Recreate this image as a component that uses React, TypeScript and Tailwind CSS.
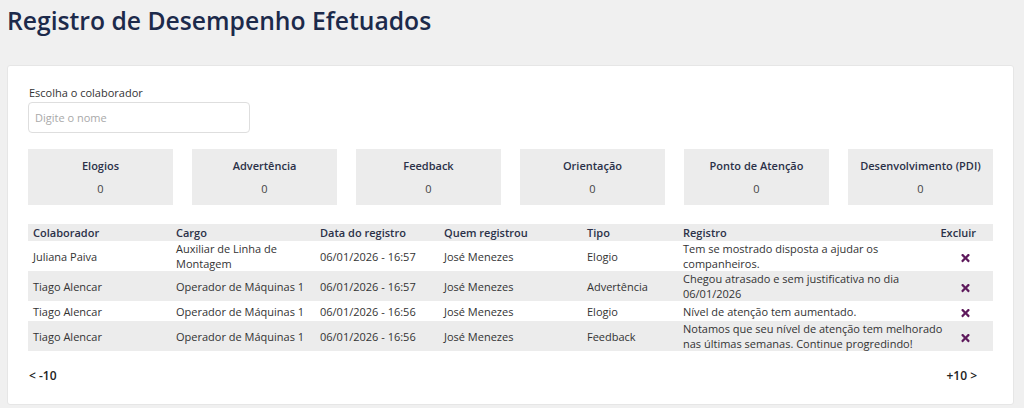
import React from 'react';
import { FaTimes } from 'react-icons/fa';

const stats = ['Elogios', 'Advertência', 'Feedback', 'Orientação', 'Ponto de Atenção', 'Desenvolvimento (PDI)'];

const rows = [
  { nome: 'Juliana Paiva', cargo: ['Auxiliar de Linha de', 'Montagem'], data: '06/01/2026 - 16:57', quem: 'José Menezes', tipo: 'Elogio', registro: ['Tem se mostrado disposta a ajudar os', 'companheiros.'] },
  { nome: 'Tiago Alencar', cargo: ['Operador de Máquinas 1'], data: '06/01/2026 - 16:57', quem: 'José Menezes', tipo: 'Advertência', registro: ['Chegou atrasado e sem justificativa no dia', '06/01/2026'] },
  { nome: 'Tiago Alencar', cargo: ['Operador de Máquinas 1'], data: '06/01/2026 - 16:56', quem: 'José Menezes', tipo: 'Elogio', registro: ['Nível de atenção tem aumentado.'] },
  { nome: 'Tiago Alencar', cargo: ['Operador de Máquinas 1'], data: '06/01/2026 - 16:56', quem: 'José Menezes', tipo: 'Feedback', registro: ['Notamos que seu nível de atenção tem melhorado', 'nas últimas semanas. Continue progredindo!'] },
];

const Lines = ({ lines }: { lines: string[] }) => (
  <>
    {lines.map((l, i) => (
      <span key={i} className="block whitespace-nowrap">{l}</span>
    ))}
  </>
);

export default function App() {
  return (
    <div className="min-h-[408px] bg-[#f0f0f0] font-['Open_Sans',sans-serif] text-[#333]">
      <h1 className="px-[7px] pt-[3px] text-[24.7px] font-semibold leading-[36px] text-[#1c2a4b]">
        Registro de Desempenho Efetuados
      </h1>

      <div className="mt-[26px] ml-[7px] mr-[10px] rounded-[3px] border border-[#e6e6e6] bg-white px-[20px] pt-[19px] pb-[20px]">
        <label className="block pl-[1px] text-[11px] leading-[15px] text-[#333]">Escolha o colaborador</label>
        <input
          placeholder="Digite o nome"
          className="mt-[2px] h-[31px] w-[222px] rounded-[4px] border border-[#dedede] px-[6px] text-[11px] outline-none placeholder:text-[#a9a9a9]"
        />

        <div className="mt-[16px] grid grid-cols-6 gap-[19px]">
          {stats.map((s) => (
            <div key={s} className="flex h-[56px] flex-col items-center justify-center gap-[8px] bg-[#ececec] text-[11px] leading-[15px]">
              <span className="font-semibold text-[#2b3148]">{s}</span>
              <span className="text-[#444]">0</span>
            </div>
          ))}
        </div>

        <table className="mt-[19px] w-full table-fixed border-collapse text-[11px] leading-[15px]">
          <colgroup>
            <col className="w-[143px]" />
            <col className="w-[144px]" />
            <col className="w-[124px]" />
            <col className="w-[143px]" />
            <col className="w-[96px]" />
            <col className="w-[250px]" />
            <col />
          </colgroup>
          <thead>
            <tr className="bg-[#ececec] text-left font-semibold text-[#2b3148]">
              <th className="h-[17px] px-[5px] py-0 font-semibold">Colaborador</th>
              <th className="px-[5px] py-0 font-semibold">Cargo</th>
              <th className="px-[5px] py-0 font-semibold">Data do registro</th>
              <th className="px-[5px] py-0 font-semibold">Quem registrou</th>
              <th className="px-[5px] py-0 font-semibold">Tipo</th>
              <th className="px-[5px] py-0 font-semibold">Registro</th>
              <th className="pr-[17px] py-0 text-right font-semibold">Excluir</th>
            </tr>
          </thead>
          <tbody>
            {rows.map((r, i) => (
              <tr key={i} className={i % 2 === 1 ? 'bg-[#ececec]' : 'bg-white'}>
                <td className="h-[20px] px-[5px] py-0">{r.nome}</td>
                <td className="px-[5px] py-0"><Lines lines={r.cargo} /></td>
                <td className="px-[5px] py-0">{r.data}</td>
                <td className="px-[5px] py-0">{r.quem}</td>
                <td className="px-[5px] py-0">{r.tipo}</td>
                <td className="px-[5px] py-0"><Lines lines={r.registro} /></td>
                <td className="py-0 pr-[22px] text-right">
                  <FaTimes className="inline-block h-[12px] w-[11px] text-[#5e1a5c]" />
                </td>
              </tr>
            ))}
          </tbody>
        </table>

        <div className="mt-[17px] flex justify-between pl-[1px] pr-[16px] text-[12px] font-semibold leading-[16px] text-[#222]">
          <span>&lt; -10</span>
          <span>+10 &gt;</span>
        </div>
      </div>
    </div>
  );
}
